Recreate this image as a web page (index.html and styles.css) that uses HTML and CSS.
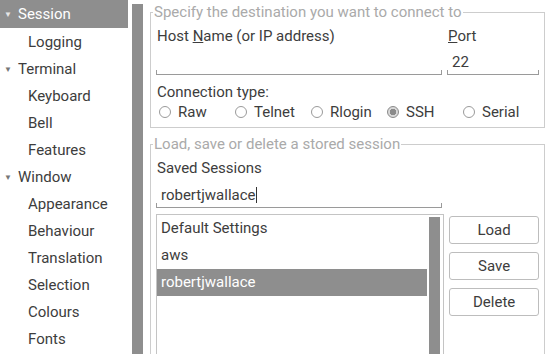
FILE: index.html
```html
<!DOCTYPE html>
<html lang="en">
<head>
    <meta charset="UTF-8">
    <title>Session</title>
    <link rel="stylesheet" href="styles.css">
</head>
<body>
    <div class="tree">
        <div class="node selected"><span class="arrow">&#9660;</span>Session</div>
        <div class="node child">Logging</div>
        <div class="node"><span class="arrow">&#9660;</span>Terminal</div>
        <div class="node child">Keyboard</div>
        <div class="node child">Bell</div>
        <div class="node child">Features</div>
        <div class="node"><span class="arrow">&#9660;</span>Window</div>
        <div class="node child">Appearance</div>
        <div class="node child">Behaviour</div>
        <div class="node child">Translation</div>
        <div class="node child">Selection</div>
        <div class="node child">Colours</div>
        <div class="node child">Fonts</div>
    </div>
    <div class="scrollbar"></div>

    <div class="main">
        <fieldset class="group">
            <legend>Specify the destination you want to connect to</legend>
            <div class="host-row">
                <div class="field host">
                    <div class="label">Host <u>N</u>ame (or IP address)</div>
                    <div class="entry"></div>
                </div>
                <div class="field port">
                    <div class="label"><u>P</u>ort</div>
                    <div class="entry">22</div>
                </div>
            </div>
            <div class="label conn">Connection type:</div>
            <div class="radios">
                <div class="radio"><span class="dot"></span>Raw</div>
                <div class="radio"><span class="dot"></span>Telnet</div>
                <div class="radio"><span class="dot"></span>Rlogin</div>
                <div class="radio"><span class="dot checked"></span>SSH</div>
                <div class="radio"><span class="dot"></span>Serial</div>
            </div>
        </fieldset>

        <fieldset class="group sessions">
            <legend>Load, save or delete a stored session</legend>
            <div class="label">Saved Sessions</div>
            <div class="entry saved">robertjwallace<span class="caret"></span></div>
            <div class="list-row">
                <div class="list">
                    <div class="items">
                        <div class="item">Default Settings</div>
                        <div class="item">aws</div>
                        <div class="item selected">robertjwallace</div>
                    </div>
                    <div class="list-scroll"></div>
                </div>
                <div class="buttons">
                    <div class="button">Load</div>
                    <div class="button">Save</div>
                    <div class="button">Delete</div>
                </div>
            </div>
        </fieldset>
    </div>
</body>
</html>
```

FILE: styles.css
```css
body {
    margin: 0;
    width: 554px;
    height: 354px;
    overflow: hidden;
    display: flex;
    font-family: Roboto, 'Noto Sans', sans-serif;
    font-size: 15px;
    color: #3d3d3d;
    background-color: white;
}
.tree {
    width: 128px;
    flex-shrink: 0;
}
.node {
    height: 27px;
    line-height: 29px;
    padding-left: 18px;
    position: relative;
    white-space: nowrap;
}
.node.child {
    padding-left: 28px;
}
.node.selected {
    height: 28px;
    background-color: #8e8e8e;
    color: white;
}
.arrow {
    position: absolute;
    left: 4px;
    font-size: 8px;
    color: #777;
}
.selected .arrow {
    color: #e6e6e6;
}
.scrollbar {
    width: 11px;
    margin: 4px 0 0 4px;
    background-color: #8e8e8e;
    flex-shrink: 0;
}
.main {
    margin-left: 7px;
    width: 395px;
}
.group {
    margin: 5px 0 0 0;
    padding: 0 5px 6px 5px;
    border: 1px solid #cdcdcd;
    min-width: 0;
}
.group legend {
    color: #aaaaaa;
    padding: 0 1px;
    margin-left: -3px;
    line-height: 14px;
}
.label {
    height: 26px;
    line-height: 26px;
    padding-left: 1px;
    white-space: nowrap;
}
.host-row {
    display: flex;
    gap: 5px;
    margin-top: 4px;
}
.host {
    width: 286px;
}
.port {
    width: 92px;
}
.entry {
    height: 25px;
    line-height: 26px;
    padding-left: 5px;
    border-bottom: 1px solid #9a9a9a;
    background:
        linear-gradient(#9a9a9a, #9a9a9a) left bottom / 1px 4px no-repeat,
        linear-gradient(#9a9a9a, #9a9a9a) right bottom / 1px 4px no-repeat;
}
.conn {
    height: 22px;
    line-height: 22px;
    margin-top: 6px;
}
.radios {
    display: flex;
    padding-left: 3px;
}
.radio {
    width: 77px;
    height: 18px;
    display: flex;
    align-items: center;
    gap: 7px;
}
.dot {
    width: 12px;
    height: 12px;
    border: 1px solid #9a9a9a;
    border-radius: 50%;
    box-sizing: border-box;
    flex-shrink: 0;
}
.dot.checked {
    border: 1px solid #8a8a8a;
    background: radial-gradient(circle, #8a8a8a 0 3px, #d8d8d8 3.5px);
}
.sessions {
    margin-top: 9px;
    padding-bottom: 20px;
}
.sessions .label {
    margin-top: 4px;
}
.saved {
    width: 281px;
    margin-top: 1px;
}
.caret {
    display: inline-block;
    width: 1px;
    height: 16px;
    background-color: #333;
    vertical-align: -3px;
}
.list-row {
    display: flex;
    gap: 5px;
    margin-top: 6px;
}
.list {
    width: 284px;
    height: 150px;
    border: 1px solid #c4c4c4;
    display: flex;
    padding: 0 3px 0 0;
}
.items {
    flex: 1;
}
.item {
    height: 27px;
    line-height: 27px;
    padding-left: 4px;
}
.item.selected {
    background-color: #8e8e8e;
    color: white;
}
.list-scroll {
    width: 11px;
    margin: 2px 0 0 2px;
    background-color: #8e8e8e;
}
.buttons {
    display: flex;
    flex-direction: column;
    gap: 8px;
    width: 90px;
    margin-top: 2px;
}
.button {
    height: 26px;
    line-height: 26px;
    text-align: center;
    border: 1px solid #bdbdbd;
    border-radius: 3px;
}
```
